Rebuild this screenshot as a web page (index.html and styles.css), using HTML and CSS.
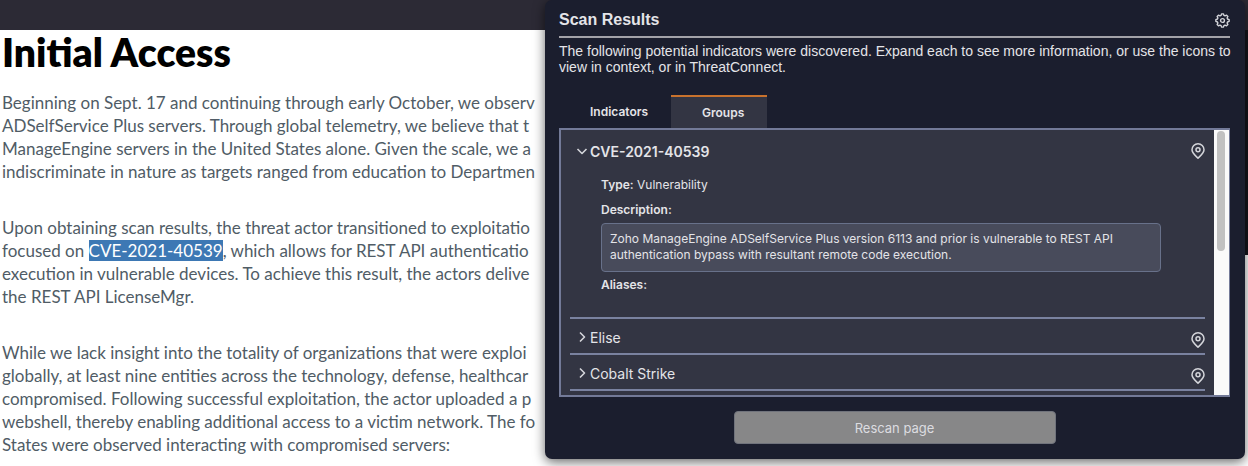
FILE: index.html
```html
<!DOCTYPE html>
<html lang="en">
<head>
    <meta charset="UTF-8">
    <meta name="viewport" content="width=device-width, initial-scale=1.0">
    <title>Initial Access</title>
    <link rel="stylesheet" href="styles.css">
</head>
<body>
    <header class="site-header"></header>

    <main class="page">
        <article class="article">
            <h1>Initial Access</h1>
            <p>Beginning on Sept. 17 and continuing through early October, we observ<br>
            ADSelfService Plus servers. Through global telemetry, we believe that t<br>
            ManageEngine servers in the United States alone. Given the scale, we a<br>
            indiscriminate in nature as targets ranged from education to Departmen</p>
            <p>Upon obtaining scan results, the threat actor transitioned to exploitatio<br>
            focused on <mark>CVE-2021-40539</mark>, which allows for REST API authenticatio<br>
            execution in vulnerable devices. To achieve this result, the actors delive<br>
            the REST API LicenseMgr.</p>
            <p>While we lack insight into the totality of organizations that were exploi<br>
            globally, at least nine entities across the technology, defense, healthcar<br>
            compromised. Following successful exploitation, the actor uploaded a p<br>
            webshell, thereby enabling additional access to a victim network. The fo<br>
            States were observed interacting with compromised servers:</p>
        </article>
        <aside class="side"></aside>
    </main>

    <svg class="sprite" aria-hidden="true">
        <symbol id="pin" viewBox="0 0 14 16">
            <path d="M7 15.200C4.600 12.800 1 10.200 1 6.800a6 6 0 0 1 12 0c0 3.400-3.600 6-6 8.400z"/>
            <circle cx="7" cy="6.700" r="2"/>
        </symbol>
    </svg>

    <section class="panel">
        <div class="panel-head">
            <h2>Scan Results</h2>
            <button class="icon-button" aria-label="Settings">
                <svg class="gear" viewBox="0 0 14 14">
                    <path d="M5.600 2.300 6.200.800h1.600l.6 1.500.9.400 1.500-.7 1.200 1.200-.7 1.500.4.900 1.500.6v1.600l-1.500.6-.4.900.7 1.500-1.200 1.200-1.500-.7-.9.400-.6 1.500H6.200l-.6-1.500-.9-.4-1.500.7L2 10.800l.7-1.500-.4-.9L.8 7.800V6.200l1.500-.6.4-.9L2 3.200 3.200 2l1.500.7z"/>
                    <circle cx="7" cy="7" r="1.800"/>
                </svg>
            </button>
        </div>
        <p class="intro">The following potential indicators were discovered. Expand each to see more information, or use the icons to view in context, or in ThreatConnect.</p>

        <div class="tabs" role="tablist">
            <button class="tab" role="tab">Indicators</button>
            <button class="tab active" role="tab" aria-selected="true">Groups</button>
        </div>

        <div class="results">
            <div class="list">
                <div class="item open">
                    <div class="item-head">
                        <button class="toggle" aria-expanded="true">
                            <svg class="chevron" viewBox="0 0 12 12"><path d="M1.500 4 6 8.500 10.500 4"/></svg>CVE-2021-40539
                        </button>
                        <button class="icon-button" aria-label="View in context"><svg class="pin"><use href="#pin"/></svg></button>
                    </div>
                    <div class="item-body">
                        <p><b>Type:</b> Vulnerability</p>
                        <p><b>Description:</b></p>
                        <div class="description">Zoho ManageEngine ADSelfService Plus version 6113 and prior is vulnerable to REST API authentication bypass with resultant remote code execution.</div>
                        <p><b>Aliases:</b></p>
                    </div>
                </div>
                <div class="item">
                    <div class="item-head">
                        <button class="toggle" aria-expanded="false">
                            <svg class="chevron" viewBox="0 0 12 12"><path d="M4 1.500 8.500 6 4 10.500"/></svg>Elise
                        </button>
                        <button class="icon-button" aria-label="View in context"><svg class="pin"><use href="#pin"/></svg></button>
                    </div>
                </div>
                <div class="item">
                    <div class="item-head">
                        <button class="toggle" aria-expanded="false">
                            <svg class="chevron" viewBox="0 0 12 12"><path d="M4 1.500 8.500 6 4 10.500"/></svg>Cobalt Strike
                        </button>
                        <button class="icon-button" aria-label="View in context"><svg class="pin"><use href="#pin"/></svg></button>
                    </div>
                </div>
            </div>
            <div class="scrollbar"><div class="thumb"></div></div>
        </div>

        <button class="rescan">Rescan page</button>
    </section>
</body>
</html>
```
FILE: styles.css
```css
* {
    box-sizing: border-box;
}

body {
    margin: 0;
    background: #fff;
    font-family: Inter, "Liberation Sans", sans-serif;
    overflow: hidden;
}

button {
    padding: 0;
    border: none;
    background: none;
    color: inherit;
    font: inherit;
    cursor: pointer;
}

.site-header {
    height: 30px;
    background: #2c2a35;
}

.page {
    display: flex;
}

.article {
    flex: 1;
    min-width: 0;
    padding-left: 2px;
    font-family: Lato, sans-serif;
    font-size: 17px;
    line-height: 23px;
    color: #505c66;
    white-space: nowrap;
}

.article h1 {
    margin: 0 0 17px;
    font-size: 39px;
    line-height: 44px;
    font-weight: 800;
    color: #000;
}

.article p {
    margin: 0 0 33px;
}

.article mark {
    background: #3d78b4;
    color: #fff;
}

.side {
    width: 3px;
    height: 225px;
    background: #15151c;
}

.sprite {
    display: none;
}

/* scan popup, sits over the page */
.panel {
    position: absolute;
    top: 0;
    right: 3px;
    width: 700px;
    padding: 4px 15px 15px 14px;
    border-radius: 7px;
    background: #1b1e2e;
    color: #e4e4e8;
    box-shadow: 0 3px 12px rgba(0, 0, 0, 0.6);
}

.panel-head {
    display: flex;
    justify-content: space-between;
    align-items: center;
    height: 34px;
    border-bottom: 2px solid #a3a2a8;
}

.panel-head h2 {
    margin: 0;
    font-family: "Liberation Sans", Arial, sans-serif;
    font-size: 16px;
}

.icon-button {
    display: flex;
}

.gear {
    width: 15px;
    height: 15px;
}

.gear,
.chevron,
.pin {
    fill: none;
    stroke: #d4d5da;
    stroke-linejoin: round;
}

.gear {
    stroke-width: 1.3;
}

.intro {
    margin: 5px -8px 20px 0;
    font-family: "Liberation Sans", Arial, sans-serif;
    font-size: 14px;
    line-height: 16px;
}

.tabs {
    display: flex;
}

.tab {
    height: 33px;
    padding: 0 23px 0 31px;
    font-size: 12px;
    font-weight: 600;
}

.tab.active {
    border-top: 2px solid #c9722d;
    background: #333543;
}

.results {
    display: flex;
    height: 269px;
    border: 2px solid #737a98;
    border-right-width: 1px;
    background: #333543;
    overflow: hidden;
}

.list {
    flex: 1;
    padding: 0 9px;
}

.item {
    height: 36px;
    border-bottom: 2px solid #7a82a0;
    font-size: 14px;
}

.item.open {
    height: 189px;
}

.item-head {
    display: flex;
    justify-content: space-between;
    align-items: center;
    height: 36px;
}

.item .icon-button {
    padding-top: 5px;
}

.item.open .item-head {
    height: 42px;
}

.item.open .icon-button {
    padding-top: 0;
}

.toggle {
    display: flex;
    align-items: center;
    gap: 2px;
    margin-left: 6px;
}

.item.open .toggle {
    font-weight: 600;
}

.chevron {
    width: 12px;
    height: 12px;
    stroke-width: 1.6;
}

.pin {
    width: 14px;
    height: 16px;
    stroke-width: 1.5;
}

.item-body {
    padding: 0 44px 0 31px;
    font-size: 12px;
    line-height: 16px;
}

.item-body p {
    margin: 5px 0 9px;
}

.item-body b {
    font-weight: 600;
}

.description {
    margin: -4px 0 4px;
    padding: 7px 8px 8px;
    border: 1px solid #68718a;
    border-radius: 4px;
    background: #484b5b;
}

.scrollbar {
    width: 15px;
    padding: 1px 3px;
    background: #fafafa;
}

.thumb {
    width: 8px;
    height: 120px;
    border-radius: 4px;
    background: #c1c1c1;
}

.rescan {
    display: block;
    width: 322px;
    height: 33px;
    margin: 14px auto 0;
    border: 1px solid #70737c;
    border-radius: 4px;
    background: #878788;
    color: #dcdce0;
    font-size: 13px;
}
```
